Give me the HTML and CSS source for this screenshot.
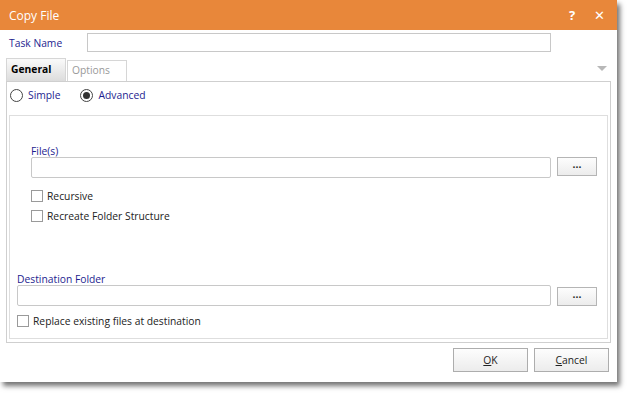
FILE: index.html
```html
<html>
  <head>
    <meta charset="UTF-8" />
    <title>Copy File</title>
    <link rel="stylesheet" href="styles.css">
  </head>
  <body>
    <div class="dialog">
      <div class="titlebar">
        <span class="title">Copy File</span>
        <span class="help">?</span>
        <span class="close">&#x2715;</span>
      </div>
      <div class="task-row">
        <label for="task_name">Task Name</label>
        <input type="text" id="task_name" class="task-input" />
      </div>
      <div class="tabs">
        <div class="tab active">General</div>
        <div class="tab">Options</div>
        <div class="tab-menu"></div>
      </div>
      <div class="panel">
        <div class="mode">
          <span class="radio"></span><span class="mode-text">Simple</span>
          <span class="radio checked"></span><span class="mode-text">Advanced</span>
        </div>
        <div class="group">
          <div class="files">
            <div class="field-label">File(s)</div>
            <div class="field">
              <div class="input"></div>
              <div class="browse">...</div>
            </div>
            <div class="check"><span class="box"></span>Recursive</div>
            <div class="check"><span class="box"></span>Recreate Folder Structure</div>
          </div>
          <div class="dest">
            <div class="field-label">Destination Folder</div>
            <div class="field">
              <div class="input"></div>
              <div class="browse">...</div>
            </div>
            <div class="check"><span class="box"></span>Replace existing files at destination</div>
          </div>
        </div>
      </div>
      <div class="footer">
        <div class="btn"><u>O</u>K</div>
        <div class="btn"><u>C</u>ancel</div>
      </div>
    </div>
  </body>
</html>
```

FILE: styles.css
```css
body {
  margin: 0;
  background: white;
  font-family: "Open Sans", "DejaVu Sans", sans-serif;
  font-size: 10.3px;
  color: #222;
}
.dialog {
  width: 617px;
  height: 382px;
  background: white;
  box-shadow: 3px 4px 5px rgba(0, 0, 0, 0.55);
  display: flex;
  flex-direction: column;
}
.titlebar {
  height: 30px;
  background: #e8873a;
  color: white;
  display: flex;
  align-items: center;
  padding: 0 12px 0 9px;
  font-size: 12px;
}
.title {
  flex: 1;
}
.help {
  font-weight: bold;
  margin-right: 19px;
  font-size: 13px;
}
.close {
  font-weight: bold;
  font-size: 13px;
}
.task-row {
  display: flex;
  align-items: center;
  margin-top: 3px;
  padding-left: 9px;
}
.task-row label {
  width: 78px;
  color: #1d1d8f;
}
.task-input {
  width: 464px;
  height: 19px;
  border: 1px solid #c8c8c8;
  box-sizing: border-box;
  padding: 0;
}
.tabs {
  display: flex;
  align-items: flex-end;
  margin-top: 6px;
  padding-left: 6px;
  height: 23px;
}
.tab {
  height: 21px;
  width: 60px;
  box-sizing: border-box;
  border: 1px solid #d6d6d6;
  border-bottom: none;
  color: #999;
  padding-left: 4px;
  line-height: 19px;
  margin-left: 1px;
}
.tab.active {
  height: 23px;
  margin-left: 0;
  color: black;
  font-weight: bold;
  background: linear-gradient(#fafafa, #dcdcdc);
  line-height: 21px;
}
.tab-menu {
  margin-left: auto;
  margin-right: 10px;
  margin-bottom: 10px;
  border-left: 5px solid transparent;
  border-right: 5px solid transparent;
  border-top: 5px solid #b8b8b8;
}
.panel {
  margin-left: 6px;
  width: 605px;
  height: 262px;
  box-sizing: border-box;
  border: 1px solid #cfcfcf;
  padding: 0 2px 3px 2px;
  display: flex;
  flex-direction: column;
}
.mode {
  display: flex;
  align-items: center;
  height: 26px;
  margin-bottom: 7px;
  padding-left: 1px;
  color: #1d1d8f;
}
.radio {
  width: 11px;
  height: 11px;
  border: 1px solid #444;
  border-radius: 50%;
  margin-right: 5px;
  display: flex;
  align-items: center;
  justify-content: center;
}
.radio.checked::after {
  content: "";
  width: 7px;
  height: 7px;
  border-radius: 50%;
  background: #333;
}
.mode-text {
  margin-right: 20px;
}
.group {
  flex: 1;
  border: 1px solid #dedede;
  display: flex;
  flex-direction: column;
}
.files {
  padding: 29px 10px 0 21px;
}
.dest {
  padding: 51px 10px 0 7px;
}
.field-label {
  color: #1d1d8f;
  height: 12px;
  line-height: 12px;
}
.field {
  display: flex;
  align-items: flex-start;
}
.input {
  flex: 1;
  height: 21px;
  box-sizing: border-box;
  border: 1px solid #c8c8c8;
  border-radius: 2px;
}
.browse {
  width: 40px;
  height: 19px;
  box-sizing: border-box;
  border: 1px solid #b5b5b5;
  background: linear-gradient(#fdfdfd, #ececec);
  margin-left: 6px;
  text-align: center;
  line-height: 13px;
  font-weight: bold;
}
.dest .browse {
  margin-top: 2px;
}
.check {
  display: flex;
  align-items: center;
  margin-top: 12px;
  height: 12px;
}
.check + .check {
  margin-top: 8px;
}
.dest .check {
  margin-top: 9px;
}
.box {
  width: 12px;
  height: 12px;
  box-sizing: border-box;
  border: 1px solid #9a9a9a;
  margin-right: 4px;
}
.footer {
  display: flex;
  justify-content: flex-end;
  padding: 5px 8px 0 0;
}
.btn {
  width: 75px;
  height: 24px;
  box-sizing: border-box;
  border: 1px solid #adadad;
  background: linear-gradient(#fdfdfd, #ececec);
  margin-left: 6px;
  text-align: center;
  line-height: 22px;
  color: #222;
}
```
